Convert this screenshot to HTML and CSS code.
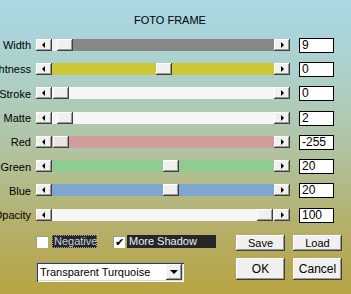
FILE: index.html
```html
<!DOCTYPE html>
<html lang="en">

<head>
    <meta charset="UTF-8">
    <title>Foto Frame</title>
    <link rel="stylesheet" href="styles.css">
</head>

<body>
    <div class="dialog">
        <div class="title">FOTO FRAME</div>

        <!-- Slider rows -->
        <div class="rows">
            <div class="row">
                <div class="label"><span>Width</span></div>
                <div class="scroll">
                    <div class="arrow left"></div>
                    <div class="track gray">
                        <div class="seg pale" style="width:5px"></div>
                        <div class="thumb"></div>
                        <div class="seg"></div>
                    </div>
                    <div class="arrow right"></div>
                </div>
                <div class="value">9</div>
            </div>
            <div class="row">
                <div class="label"><span>Brightness</span></div>
                <div class="scroll">
                    <div class="arrow left"></div>
                    <div class="track yellow">
                        <div class="seg" style="width:104px"></div>
                        <div class="thumb"></div>
                        <div class="seg"></div>
                    </div>
                    <div class="arrow right"></div>
                </div>
                <div class="value">0</div>
            </div>
            <div class="row">
                <div class="label"><span>Stroke</span></div>
                <div class="scroll">
                    <div class="arrow left"></div>
                    <div class="track white">
                        <div class="seg" style="width:1px"></div>
                        <div class="thumb"></div>
                        <div class="seg"></div>
                    </div>
                    <div class="arrow right"></div>
                </div>
                <div class="value">0</div>
            </div>
            <div class="row">
                <div class="label"><span>Matte</span></div>
                <div class="scroll">
                    <div class="arrow left"></div>
                    <div class="track white">
                        <div class="seg" style="width:5px"></div>
                        <div class="thumb"></div>
                        <div class="seg"></div>
                    </div>
                    <div class="arrow right"></div>
                </div>
                <div class="value">2</div>
            </div>
            <div class="row">
                <div class="label"><span>Red</span></div>
                <div class="scroll">
                    <div class="arrow left"></div>
                    <div class="track red">
                        <div class="seg" style="width:1px"></div>
                        <div class="thumb faded"></div>
                        <div class="seg"></div>
                    </div>
                    <div class="arrow right"></div>
                </div>
                <div class="value">-255</div>
            </div>
            <div class="row">
                <div class="label"><span>Green</span></div>
                <div class="scroll">
                    <div class="arrow left"></div>
                    <div class="track green">
                        <div class="seg" style="width:111px"></div>
                        <div class="thumb"></div>
                        <div class="seg"></div>
                    </div>
                    <div class="arrow right"></div>
                </div>
                <div class="value">20</div>
            </div>
            <div class="row">
                <div class="label"><span>Blue</span></div>
                <div class="scroll">
                    <div class="arrow left"></div>
                    <div class="track blue">
                        <div class="seg" style="width:111px"></div>
                        <div class="thumb"></div>
                        <div class="seg"></div>
                    </div>
                    <div class="arrow right"></div>
                </div>
                <div class="value">20</div>
            </div>
            <div class="row">
                <div class="label"><span>Opacity</span></div>
                <div class="scroll">
                    <div class="arrow left"></div>
                    <div class="track white">
                        <div class="seg" style="width:205px"></div>
                        <div class="thumb"></div>
                        <div class="seg"></div>
                    </div>
                    <div class="arrow right"></div>
                </div>
                <div class="value">100</div>
            </div>
        </div>

        <!-- Options and buttons -->
        <div class="bottom">
            <div class="checks">
                <span class="box"></span>
                <span class="check-label negative">Negative</span>
                <span class="box checked">&#10004;</span>
                <span class="check-label shadow">More Shadow</span>
            </div>
            <button class="btn">Save</button>
            <button class="btn">Load</button>

            <div class="select">
                <span class="select-text">Transparent Turquoise</span>
                <span class="select-arrow"></span>
            </div>
            <button class="btn big">OK</button>
            <button class="btn big">Cancel</button>
        </div>
    </div>
</body>

</html>
```

FILE: styles.css
```css
/* Colours */
:root {
    --face: #f0f0ee;
    --shadow: #9a9a9a;
    --dark: #404040;
}

/* Base */
body {
    margin: 0;
    width: 351px;
    height: 294px;
    overflow: hidden;
    font-family: "Liberation Sans", Arial, sans-serif;
    font-size: 11px;
    color: #000;
    background: linear-gradient(#a8d8e6 0%, #adcfc6 28%, #b1c29e 52%, #b4b170 74%, #b8a442 100%);
}

.title {
    padding: 13px 0 0 134px;
    height: 20px;
    line-height: 14px;
    font-size: 11px;
}

/* Slider rows */
.rows {
    display: flex;
    flex-direction: column;
}

.row {
    display: flex;
    align-items: center;
    height: 24.3px;
}

.label {
    width: 31px;
    display: flex;
    justify-content: flex-end;
    white-space: nowrap;
    margin-right: 5px;
    font-size: 11px;
}

.scroll {
    display: flex;
    width: 254px;
    height: 12px;
    margin-top: -1px;
}

.arrow,
.thumb {
    width: 16px;
    height: 12px;
    flex: none;
    box-sizing: border-box;
    background: var(--face);
    box-shadow: inset -1px -1px var(--dark), inset 1px 1px #fff, inset -2px -2px var(--shadow);
    position: relative;
}

.thumb.faded {
    background: #ebe4e4;
}

.arrow::after {
    content: "";
    position: absolute;
    top: 3px;
    border-top: 3px solid transparent;
    border-bottom: 3px solid transparent;
}

.arrow.left::after {
    left: 6px;
    border-right: 3px solid #000;
}

.arrow.right::after {
    left: 7px;
    border-left: 3px solid #000;
}

.track {
    display: flex;
    flex: 1;
}

.seg {
    flex: none;
}

.seg:last-child {
    flex: 1;
}

.gray { background: #878787; }
.gray .pale { background: #f2f2f0; }
.yellow { background: #cec735; }
.white { background: #f6f6f4; }
.red { background: #d19c9c; }
.green { background: #90cb92; }
.blue { background: #7ea7d0; }

.value {
    margin-left: 9px;
    width: 35px;
    height: 15px;
    box-sizing: border-box;
    border: 1px solid #000;
    background: #fff;
    padding-left: 2px;
    line-height: 13px;
    font-size: 12px;
}

/* Bottom area */
.bottom {
    display: grid;
    grid-template-columns: 192px 49px 49px;
    grid-template-rows: 16px 22px;
    column-gap: 8px;
    row-gap: 7px;
    padding-left: 36px;
    margin-top: 7.6px;
}

.checks {
    display: flex;
    align-items: flex-start;
    height: 13px;
}

.box {
    width: 12px;
    height: 12px;
    margin-top: 1px;
    box-sizing: border-box;
    background: #fff;
    box-shadow: inset 1px 1px var(--shadow), inset -1px -1px #fff;
    font-size: 11px;
    line-height: 12px;
    text-align: center;
}

.box.checked {
    margin-left: 16px;
}

.check-label {
    height: 13px;
    box-sizing: border-box;
    background: #262628;
    color: #eef0f6;
    line-height: 13px;
    padding-left: 2px;
}

.negative {
    width: 45px;
    margin-left: 4px;
    outline: 1px dotted #9aa0b0;
    outline-offset: -1px;
    color: #c8d0e0;
}

.shadow {
    width: 89px;
    margin-left: 2px;
}

.btn {
    font-family: inherit;
    font-size: 11px;
    padding: 0;
    border: none;
    background: var(--face);
    box-shadow: inset -1px -1px var(--dark), inset 1px 1px #fff, inset -2px -2px var(--shadow);
    color: #000;
}

.btn.big {
    font-size: 12px;
}

.select {
    display: flex;
    align-items: center;
    width: 148px;
    height: 20px;
    margin-top: 4px;
    box-sizing: border-box;
    padding: 2px;
    background: #fff;
    box-shadow: inset 1px 1px var(--shadow), inset 2px 2px var(--dark), inset -1px -1px #fff, inset -2px -2px #d8d8d8;
}

.select-text {
    flex: 1;
    padding-left: 2px;
    font-size: 11px;
}

.select-arrow {
    width: 16px;
    height: 16px;
    background: var(--face);
    box-shadow: inset -1px -1px var(--dark), inset 1px 1px #fff, inset -2px -2px var(--shadow);
    position: relative;
}

.select-arrow::after {
    content: "";
    position: absolute;
    left: 4px;
    top: 6px;
    border-left: 4px solid transparent;
    border-right: 4px solid transparent;
    border-top: 4px solid #000;
}
```
